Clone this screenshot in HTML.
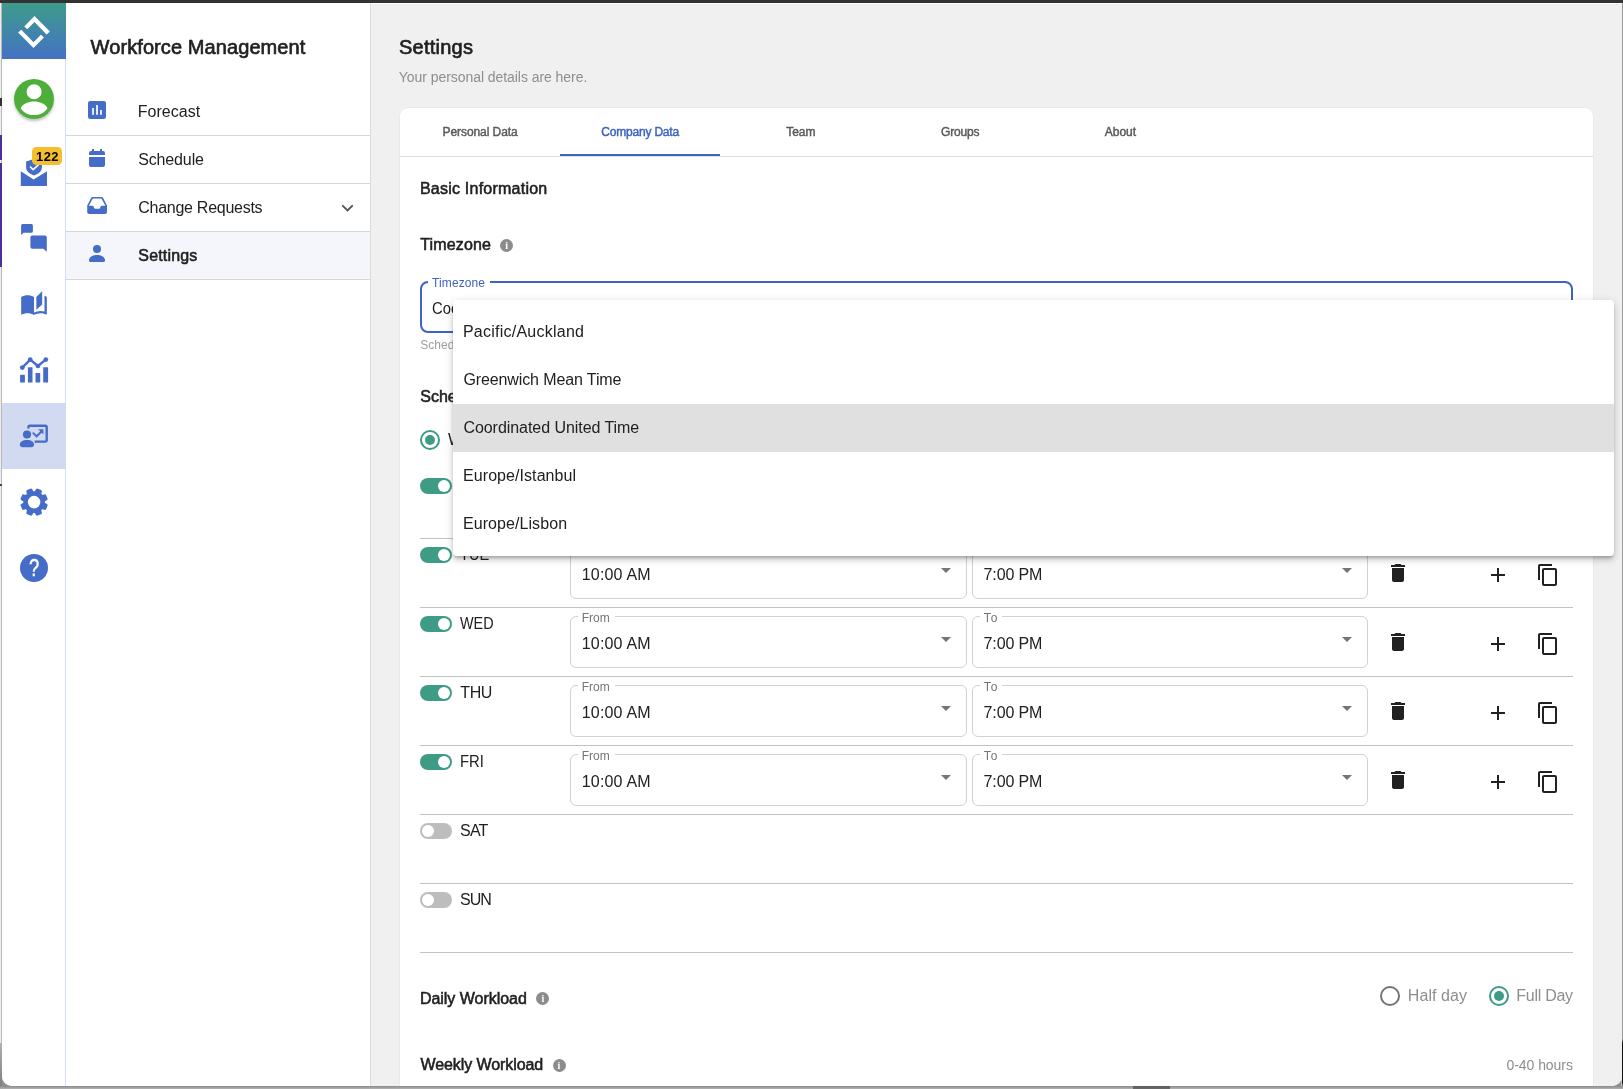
<!DOCTYPE html>
<html lang="en"><head><meta charset="utf-8"><title>Workforce Management - Settings</title>
<style>
*{box-sizing:border-box;margin:0;padding:0}
html,body{width:1623px;height:1089px;overflow:hidden}
body{position:relative;background:#8f8f8f;font-family:"Liberation Sans",sans-serif;-webkit-font-smoothing:antialiased}
.topbar{position:absolute;left:0;top:0;width:1623px;height:3px;background:#333}
.leftstrip{position:absolute;left:0;top:3px;width:2px;height:1086px;background:linear-gradient(#4b2f9d,#4b2f9d) 0 132px/2px 25px no-repeat,linear-gradient(#4b2f9d,#4b2f9d) 0 160px/2px 104px no-repeat,linear-gradient(#333,#333) 0 95px/2px 8px no-repeat,linear-gradient(#444,#444) 0 481px/2px 2px no-repeat,linear-gradient(90deg,#ededed 0,#ededed 1px,#b9b9b9 1px,#b9b9b9 2px) 0 0/2px 1040px no-repeat,linear-gradient(#b0b0b0,#7d7d7d) 0 1040px/2px 46px no-repeat}
.rightstrip{position:absolute;left:1621px;top:3px;width:2px;height:1086px;background:linear-gradient(90deg,#c8c8c8 0,#c8c8c8 1px,transparent 1px),linear-gradient(#9c9c9c 0,#9c9c9c 1036px,#111 1040px,#111 1080px,#8d8d8d 1083px)}
.bottomstrip{position:absolute;left:0;top:1086px;width:1623px;height:3px;background:linear-gradient(#5c5c5c,#6a6a6a) 1133px 0/37px 3px no-repeat,linear-gradient(#8a8a8a,#b2b2b2)}
.win{position:absolute;left:2px;top:3px;width:1620px;height:1083px;overflow:hidden;background:#fff;border-radius:0 0 10px 10px}
.page{position:absolute;left:-2px;top:-3px;width:1623px;height:1089px;will-change:transform}
.page>*{position:absolute}
.mainbg{left:371px;top:3px;width:1252px;height:1086px;background:#f0f0f0;border-top:1px solid #fff}
.rail{left:2px;top:3px;width:64px;height:1086px;background:#fff;border-right:1px solid #d5dff3}
.logo{left:2px;top:3px;width:64px;height:56px;background:linear-gradient(#3d9c8b,#4472c4)}
.logo svg{display:block}
.railactive{left:2px;top:403px;width:64px;height:66px;background:#d2daf2}
.avatar{left:14px;top:79px;width:40px;height:40px;border-radius:50%;box-shadow:0 2px 3px rgba(0,0,0,.25)}
.nav{left:66px;top:3px;width:305px;height:1086px;background:#fff;border-right:1px solid #dcdcdc}
.navrow{left:66px;width:304px;height:48px;border-bottom:1px solid #d6d6d6}
.navrow.sel{background:#f5f6fc}
.ic{position:absolute;display:block;overflow:visible}
.t{position:absolute;white-space:nowrap;display:block}
.card{left:400px;top:108px;width:1193px;height:1000px;background:#fff;border-radius:8px;box-shadow:0 0 0 .5px rgba(0,0,0,.06)}
.tabline{left:400px;top:156px;width:1193px;height:1px;background:#dedede}
.tabind{left:560px;top:154px;width:160px;height:2px;background:#3f63c3}
.tzfield{left:420px;top:281px;width:1153px;height:52px;border:2px solid #3f63c3;border-radius:8px}
.notch{background:#fff}
.hr{left:420px;width:1153px;height:1px;background:#c2c2c2}
.fld{height:52px;border:1px solid #d2d2d2;border-radius:6px}
.tg{width:32px;height:16px;border-radius:8px}
.tg i{position:absolute;top:2px;width:12px;height:12px;border-radius:50%;background:#fff}
.tg.on{background:#3d9b86}
.tg.on i{left:18.4px}
.tg.off{background:#bdbdbd}
.tg.off i{left:1.6px}
.radio{width:20px;height:20px;border-radius:50%;border:2px solid #3d9b86}
.radio i{position:absolute;left:3px;top:3px;width:10px;height:10px;border-radius:50%;background:#3d9b86}
.radio.off{border-color:#757575}
.menu{left:453px;top:300px;width:1161px;height:256px;background:#fff;border-radius:4px;box-shadow:0 3px 3px -1px rgba(0,0,0,.2),0 5px 6px 0 rgba(0,0,0,.12),0 1px 9px 0 rgba(0,0,0,.12)}
.mi.sel{position:absolute;left:0;top:104px;width:1161px;height:48px;background:#e0e0e0}
.info{width:13px;height:13px;border-radius:50%;background:#8c8c8c;color:#fff;font-size:10px;line-height:13px;font-weight:700;text-align:center;font-family:"Liberation Serif","Liberation Sans",serif}
.badge{left:32px;top:147px;width:30px;height:18px;border-radius:4.5px;background:#f5be2c}

</style></head>
<body>
<div class="topbar"></div>
<div class="leftstrip"></div>
<div class="rightstrip"></div>
<div class="bottomstrip"></div>
<div class="win">
<div class="page">
<div class="mainbg"></div>
<div class="rail"></div>
<div class="logo"><svg width="64" height="56" viewBox="2 3 64 56"><path fill="#fff" d="M24.2 26.5 34.5 15.9 49.9 31.5 46.6 34.5 34.5 22.1 27.3 29.3z"/><path fill="#fff" d="M18.1 32.5 33.5 48.1 43.9 37.5 40.9 34.7 33.5 42.2 21.3 29.8z"/></svg></div>
<div class="railactive"></div>
<div class="avatar"></div>
<svg class="ic" style="left:10px;top:75px" width="48" height="48" viewBox="0 0 24 24"><circle cx="12" cy="12" r="10" fill="#4dae3a"/><circle cx="12.05" cy="8.35" r="3.75" fill="#fff"/><path fill="#fff" d="M12.05 13.3c2.6 0 6.1 1.3 6.65 3.4-1.4 2.1-3.9 3.35-6.65 3.35s-5.25-1.25-6.65-3.35c.55-2.1 4.05-3.4 6.65-3.4z"/></svg>
<svg class="ic" style="left:2px;top:3px" width="64" height="640" viewBox="2 3 64 640">
<path fill="#456cc8" d="M20.8 171.2 33.6 179.5 47 171.2V185.9H20.8Z"/>
<path fill="#456cc8" d="M34 159 41.9 161.6V167.2C41.9 171 38.6 174 34 175.4 29.4 174 26.1 171 26.1 167.2V161.6Z"/>
<path fill="none" stroke="#fff" stroke-width="1.5" d="M30 166.6 33.2 169.6 38.6 164.6"/>
<path fill="#456cc8" d="M22.6 224H31.4Q32.9 224 32.9 225.5V231.2Q32.9 232.7 31.4 232.7H23.6L21.1 235V225.5Q21.1 224 22.6 224Z"/>
<path fill="#456cc8" d="M32.2 235.4H45Q46.8 235.4 46.8 237.2V251.8L43.4 248.8H32.2Q30.4 248.8 30.4 247V237.2Q30.4 235.4 32.2 235.4Z"/>
<g transform="translate(20 290) scale(1.1667)"><path fill="#456cc8" d="M19 1l-5 5v11l5-4.5V1zM1 6v14.65c0 .25.25.5.5.5.1 0 .15-.05.25-.05C3.1 20.45 5.05 20 6.5 20c1.95 0 4.05.4 5.5 1.5V6c-1.45-1.1-3.55-1.5-5.5-1.5S2.45 4.9 1 6zm22 13.5V6c-.6-.45-1.25-.75-2-1v13.5c-1.1-.35-2.3-.5-3.5-.5-1.7 0-4.15.65-5.5 1.5v2c1.35-.85 3.8-1.5 5.5-1.5 1.65 0 3.35.3 4.75 1.05.1.05.15.05.25.05.25 0 .5-.25.5-.5v-1.1z"/></g>
<rect x="20.1" y="374.8" width="4.8" height="7.8" rx="0.6" fill="#456cc8"/>
<rect x="27.9" y="367.2" width="4.6" height="15.4" rx="0.6" fill="#456cc8"/>
<rect x="35.5" y="373.0" width="4.7" height="9.6" rx="0.6" fill="#456cc8"/>
<rect x="43.2" y="367.2" width="4.9" height="15.4" rx="0.6" fill="#456cc8"/>
<path fill="none" stroke="#456cc8" stroke-width="2.3" stroke-linejoin="round" d="M22.3 367.6 30.2 359.6 37.9 366 45.8 359.6"/>
<circle cx="22.3" cy="367.6" r="2.35" fill="#456cc8"/>
<circle cx="30.2" cy="359.6" r="2.35" fill="#456cc8"/>
<circle cx="37.9" cy="366.0" r="2.35" fill="#456cc8"/>
<circle cx="45.8" cy="359.6" r="2.35" fill="#456cc8"/>
<path fill="none" stroke="#456cc8" stroke-width="2.4" stroke-linejoin="round" d="M28.4 428.6V427.3Q28.4 425.8 29.9 425.8H45.2Q46.7 425.8 46.7 427.3V440.1Q46.7 441.6 45.2 441.6H34.6"/>
<circle cx="27" cy="434.5" r="4.1" fill="#456cc8"/>
<path fill="#456cc8" d="M19.9 444.6C19.9 441.8 22.6 440 27 440S34 441.8 34 444.6Q34 447.3 31.3 447.3H22.6Q19.9 447.3 19.9 444.6Z"/>
<path fill="none" stroke="#456cc8" stroke-width="2" d="M32.8 432.6 36.6 436.3 42.3 430.8"/>
<path fill="#456cc8" d="M38.2 429.2H43.4V434.4Z"/>
<path fill="#456cc8" stroke="#456cc8" stroke-width="2.8" stroke-linejoin="round" d="M43.58 503.60 L46.21 505.21 L44.86 508.46 L41.87 507.74 L39.74 509.87 L40.46 512.86 L37.21 514.21 L35.60 511.58 L32.60 511.58 L30.99 514.21 L27.74 512.86 L28.46 509.87 L26.33 507.74 L23.34 508.46 L21.99 505.21 L24.62 503.60 L24.62 500.60 L21.99 498.99 L23.34 495.74 L26.33 496.46 L28.46 494.33 L27.74 491.34 L30.99 489.99 L32.60 492.62 L35.60 492.62 L37.21 489.99 L40.46 491.34 L39.74 494.33 L41.87 496.46 L44.86 495.74 L46.21 498.99 L43.58 500.60Z"/><circle cx="34.1" cy="502.1" r="6.3" fill="#fff"/>
<circle cx="34" cy="568" r="14" fill="#456cc8"/>
</svg>
<span class="t" style="left:24px;top:555px;width:20px;text-align:center;font-size:23.5px;line-height:26px;color:#fff;-webkit-text-stroke:.4px #fff;transform:scaleX(.78)">?</span>
<div class="badge"></div>
<span class="t" id="t0" style="left:36.06px;top:150px;font-size:13px;line-height:13px;color:#000;font-weight:700;letter-spacing:0.369px;">122</span>
<div class="nav"></div>
<div class="navrow" style="top:88px"></div>
<div class="navrow" style="top:136px"></div>
<div class="navrow" style="top:184px"></div>
<div class="navrow sel" style="top:232px"></div>
<span class="t" id="t1" style="left:90.58px;top:37px;font-size:20px;line-height:20px;color:#212121;-webkit-text-stroke:0.65px #212121;letter-spacing:0.089px;">Workforce Management</span>
<span class="t" id="t2" style="left:137.84px;top:104px;font-size:16px;line-height:16px;color:#212121;letter-spacing:0.010px;">Forecast</span>
<span class="t" id="t3" style="left:138.19px;top:152px;font-size:16px;line-height:16px;color:#212121;letter-spacing:-0.136px;">Schedule</span>
<span class="t" id="t4" style="left:138.23px;top:200px;font-size:16px;line-height:16px;color:#212121;letter-spacing:-0.265px;">Change Requests</span>
<span class="t" id="t5" style="left:138.36px;top:248px;font-size:16px;line-height:16px;color:#212121;-webkit-text-stroke:0.55px #212121;letter-spacing:0.159px;">Settings</span>
<svg class="ic" style="left:66px;top:88px" width="304" height="192" viewBox="66 88 304 192">
<rect x="88" y="101" width="18" height="18" rx="2.2" fill="#456cc8"/>
<rect x="92" y="108" width="2" height="6.8" fill="#e3e9f7"/>
<rect x="96" y="105" width="2" height="9.8" fill="#e3e9f7"/>
<rect x="100" y="110" width="2" height="4.8" fill="#e3e9f7"/>
<rect x="92" y="149" width="2" height="3" fill="#456cc8"/><rect x="100" y="149" width="2" height="3" fill="#456cc8"/>
<path fill="#456cc8" d="M91 151H103Q105 151 105 153V155H89V153Q89 151 91 151ZM89 157H105V165Q105 167 103 167H91Q89 167 89 165Z"/>
<path fill="#456cc8" fill-rule="evenodd" d="M87.2 205.4 91.2 197.8Q91.7 197 92.7 197H101.5Q102.5 197 103 197.8L107 205.4V212Q107 214 105 214H89.2Q87.2 214 87.2 212ZM88.8 205.7H92.3Q93.3 205.7 93.6 206.6L94 207.8Q94.3 208.7 95.3 208.7H98.9Q99.9 208.7 100.2 207.8L100.6 206.6Q100.9 205.7 101.9 205.7H105.4L101.7 198.9Q101.5 198.6 101.1 198.6H93.1Q92.7 198.6 92.5 198.9Z"/>
<circle cx="97" cy="249" r="4" fill="#456cc8"/>
<path fill="#456cc8" d="M89 260.5C89 257.2 92.4 255 97 255S105 257.2 105 260.5Q105 262 103.5 262H90.5Q89 262 89 260.5Z"/>
<path fill="none" stroke="#555" stroke-width="1.9" stroke-linecap="round" stroke-linejoin="miter" d="M342.8 205.8 347.5 210.5 352.2 205.8"/>
</svg>
<span class="t" id="t6" style="left:398.97px;top:37px;font-size:20px;line-height:20px;color:#212121;-webkit-text-stroke:0.65px #212121;letter-spacing:0.252px;">Settings</span>
<span class="t" id="t7" style="left:398.75px;top:70px;font-size:14px;line-height:14px;color:#8e8e8e;letter-spacing:-0.053px;">Your personal details are here.</span>
<div class="card"></div>
<div class="tabline"></div>
<div class="tabind"></div>
<span class="t" id="t8" style="left:442.55px;top:126px;font-size:12px;line-height:12px;color:#5a5a5a;-webkit-text-stroke:0.45px #5a5a5a;letter-spacing:-0.077px;">Personal Data</span>
<span class="t" id="t9" style="left:601.31px;top:126px;font-size:12px;line-height:12px;color:#3f63c3;-webkit-text-stroke:0.45px #3f63c3;letter-spacing:-0.199px;">Company Data</span>
<span class="t" id="t10" style="left:786.18px;top:126px;font-size:12px;line-height:12px;color:#5a5a5a;-webkit-text-stroke:0.45px #5a5a5a;letter-spacing:-0.041px;">Team</span>
<span class="t" id="t11" style="left:941.09px;top:126px;font-size:12px;line-height:12px;color:#5a5a5a;-webkit-text-stroke:0.45px #5a5a5a;letter-spacing:-0.201px;">Groups</span>
<span class="t" id="t12" style="left:1104.77px;top:126px;font-size:12px;line-height:12px;color:#5a5a5a;-webkit-text-stroke:0.45px #5a5a5a;">About</span>
<span class="t" id="t13" style="left:419.91px;top:181px;font-size:16px;line-height:16px;color:#212121;-webkit-text-stroke:0.55px #212121;letter-spacing:0.232px;">Basic Information</span>
<span class="t" id="t14" style="left:420.26px;top:237px;font-size:16px;line-height:16px;color:#212121;-webkit-text-stroke:0.55px #212121;letter-spacing:0.140px;">Timezone</span>
<div class="info" style="left:500.1px;top:238.5px">i</div>
<div class="tzfield"></div>
<div class="notch" style="left:428px;top:280px;width:62px;height:4px"></div>
<span class="t" id="t15" style="left:432.10px;top:277px;font-size:12px;line-height:12px;color:#3f63c3;letter-spacing:0.097px;">Timezone</span>
<span class="t" id="t16" style="left:432.00px;top:301px;font-size:16px;line-height:16px;color:#212121;transform:scaleX(.925);transform-origin:0 0;">Coordinated United Time</span>
<span class="t" id="t17" style="left:420.30px;top:339px;font-size:12px;line-height:12px;color:#9e9e9e;">Schedules are shown in this timezone</span>
<span class="t" id="t18" style="left:420.30px;top:389px;font-size:16px;line-height:16px;color:#212121;-webkit-text-stroke:0.55px #212121;">Schedule</span>
<div class="radio on" style="left:420px;top:430px"><i></i></div>
<span class="t" id="t19" style="left:448.00px;top:432px;font-size:16px;line-height:16px;color:#212121;">Weekly</span>
<div class="tg on" style="left:420px;top:478px"><i></i></div>
<span class="t" id="t20" style="left:459.24px;top:478px;font-size:16px;line-height:16px;color:#212121;letter-spacing:-0.664px;">MON</span>
<div class="fld" style="left:570px;top:478px;width:397px"></div>
<div class="notch" style="left:578px;top:477px;width:37px;height:3px"></div>
<span class="t" id="t21" style="left:581.73px;top:474px;font-size:12px;line-height:12px;color:#757575;letter-spacing:0.021px;">From</span>
<span class="t" id="t22" style="left:581.80px;top:498px;font-size:16px;line-height:16px;color:#212121;letter-spacing:0.170px;">10:00 AM</span>
<svg class="ic" style="left:933.8px;top:489px" width="24" height="24" viewBox="0 0 24 24" ><path fill="#757575" d="M7 10l5 5 5-5z"/></svg>
<div class="fld" style="left:972px;top:478px;width:396px"></div>
<div class="notch" style="left:980px;top:477px;width:22px;height:3px"></div>
<span class="t" id="t23" style="left:983.85px;top:474px;font-size:12px;line-height:12px;color:#757575;letter-spacing:0.981px;">To</span>
<span class="t" id="t24" style="left:983.55px;top:498px;font-size:16px;line-height:16px;color:#212121;letter-spacing:-0.115px;">7:00 PM</span>
<svg class="ic" style="left:1335px;top:489px" width="24" height="24" viewBox="0 0 24 24" ><path fill="#757575" d="M7 10l5 5 5-5z"/></svg>
<svg class="ic" style="left:1386px;top:492px" width="24" height="24" viewBox="0 0 24 24" ><path fill="#212121" d="M6 19c0 1.1.9 2 2 2h8c1.1 0 2-.9 2-2V7H6v12zM19 4h-3.5l-1-1h-5l-1 1H5v2h14V4z"/></svg>
<svg class="ic" style="left:1486px;top:494px" width="24" height="24" viewBox="0 0 24 24" ><path fill="#212121" d="M19 13h-6v6h-2v-6H5v-2h6V5h2v6h6v2z"/></svg>
<svg class="ic" style="left:1536px;top:494px" width="24" height="24" viewBox="0 0 24 24" ><path fill="#212121" d="M16 1H4c-1.1 0-2 .9-2 2v14h2V3h12V1zm3 4H8c-1.1 0-2 .9-2 2v14c0 1.1.9 2 2 2h11c1.1 0 2-.9 2-2V7c0-1.1-.9-2-2-2zm0 16H8V7h11v14z"/></svg>
<div class="hr" style="top:538px"></div>
<div class="tg on" style="left:420px;top:547px"><i></i></div>
<span class="t" id="t25" style="left:460.12px;top:547px;font-size:16px;line-height:16px;color:#212121;transform:scaleX(0.9136);transform-origin:0 0;">TUE</span>
<div class="fld" style="left:570px;top:547px;width:397px"></div>
<div class="notch" style="left:578px;top:546px;width:37px;height:3px"></div>
<span class="t" id="t26" style="left:581.73px;top:543px;font-size:12px;line-height:12px;color:#757575;letter-spacing:0.021px;">From</span>
<span class="t" id="t27" style="left:581.80px;top:567px;font-size:16px;line-height:16px;color:#212121;letter-spacing:0.170px;">10:00 AM</span>
<svg class="ic" style="left:933.8px;top:558px" width="24" height="24" viewBox="0 0 24 24" ><path fill="#757575" d="M7 10l5 5 5-5z"/></svg>
<div class="fld" style="left:972px;top:547px;width:396px"></div>
<div class="notch" style="left:980px;top:546px;width:22px;height:3px"></div>
<span class="t" id="t28" style="left:983.85px;top:543px;font-size:12px;line-height:12px;color:#757575;letter-spacing:0.981px;">To</span>
<span class="t" id="t29" style="left:983.55px;top:567px;font-size:16px;line-height:16px;color:#212121;letter-spacing:-0.115px;">7:00 PM</span>
<svg class="ic" style="left:1335px;top:558px" width="24" height="24" viewBox="0 0 24 24" ><path fill="#757575" d="M7 10l5 5 5-5z"/></svg>
<svg class="ic" style="left:1386px;top:561px" width="24" height="24" viewBox="0 0 24 24" ><path fill="#212121" d="M6 19c0 1.1.9 2 2 2h8c1.1 0 2-.9 2-2V7H6v12zM19 4h-3.5l-1-1h-5l-1 1H5v2h14V4z"/></svg>
<svg class="ic" style="left:1486px;top:563px" width="24" height="24" viewBox="0 0 24 24" ><path fill="#212121" d="M19 13h-6v6h-2v-6H5v-2h6V5h2v6h6v2z"/></svg>
<svg class="ic" style="left:1536px;top:563px" width="24" height="24" viewBox="0 0 24 24" ><path fill="#212121" d="M16 1H4c-1.1 0-2 .9-2 2v14h2V3h12V1zm3 4H8c-1.1 0-2 .9-2 2v14c0 1.1.9 2 2 2h11c1.1 0 2-.9 2-2V7c0-1.1-.9-2-2-2zm0 16H8V7h11v14z"/></svg>
<div class="hr" style="top:607px"></div>
<div class="tg on" style="left:420px;top:616px"><i></i></div>
<span class="t" id="t30" style="left:460.21px;top:616px;font-size:16px;line-height:16px;color:#212121;transform:scaleX(0.8986);transform-origin:0 0;">WED</span>
<div class="fld" style="left:570px;top:616px;width:397px"></div>
<div class="notch" style="left:578px;top:615px;width:37px;height:3px"></div>
<span class="t" id="t31" style="left:581.73px;top:612px;font-size:12px;line-height:12px;color:#757575;letter-spacing:0.021px;">From</span>
<span class="t" id="t32" style="left:581.80px;top:636px;font-size:16px;line-height:16px;color:#212121;letter-spacing:0.170px;">10:00 AM</span>
<svg class="ic" style="left:933.8px;top:627px" width="24" height="24" viewBox="0 0 24 24" ><path fill="#757575" d="M7 10l5 5 5-5z"/></svg>
<div class="fld" style="left:972px;top:616px;width:396px"></div>
<div class="notch" style="left:980px;top:615px;width:22px;height:3px"></div>
<span class="t" id="t33" style="left:983.85px;top:612px;font-size:12px;line-height:12px;color:#757575;letter-spacing:0.981px;">To</span>
<span class="t" id="t34" style="left:983.55px;top:636px;font-size:16px;line-height:16px;color:#212121;letter-spacing:-0.115px;">7:00 PM</span>
<svg class="ic" style="left:1335px;top:627px" width="24" height="24" viewBox="0 0 24 24" ><path fill="#757575" d="M7 10l5 5 5-5z"/></svg>
<svg class="ic" style="left:1386px;top:630px" width="24" height="24" viewBox="0 0 24 24" ><path fill="#212121" d="M6 19c0 1.1.9 2 2 2h8c1.1 0 2-.9 2-2V7H6v12zM19 4h-3.5l-1-1h-5l-1 1H5v2h14V4z"/></svg>
<svg class="ic" style="left:1486px;top:632px" width="24" height="24" viewBox="0 0 24 24" ><path fill="#212121" d="M19 13h-6v6h-2v-6H5v-2h6V5h2v6h6v2z"/></svg>
<svg class="ic" style="left:1536px;top:632px" width="24" height="24" viewBox="0 0 24 24" ><path fill="#212121" d="M16 1H4c-1.1 0-2 .9-2 2v14h2V3h12V1zm3 4H8c-1.1 0-2 .9-2 2v14c0 1.1.9 2 2 2h11c1.1 0 2-.9 2-2V7c0-1.1-.9-2-2-2zm0 16H8V7h11v14z"/></svg>
<div class="hr" style="top:676px"></div>
<div class="tg on" style="left:420px;top:685px"><i></i></div>
<span class="t" id="t35" style="left:460.21px;top:685px;font-size:16px;line-height:16px;color:#212121;letter-spacing:-0.350px;">THU</span>
<div class="fld" style="left:570px;top:685px;width:397px"></div>
<div class="notch" style="left:578px;top:684px;width:37px;height:3px"></div>
<span class="t" id="t36" style="left:581.73px;top:681px;font-size:12px;line-height:12px;color:#757575;letter-spacing:0.021px;">From</span>
<span class="t" id="t37" style="left:581.80px;top:705px;font-size:16px;line-height:16px;color:#212121;letter-spacing:0.170px;">10:00 AM</span>
<svg class="ic" style="left:933.8px;top:696px" width="24" height="24" viewBox="0 0 24 24" ><path fill="#757575" d="M7 10l5 5 5-5z"/></svg>
<div class="fld" style="left:972px;top:685px;width:396px"></div>
<div class="notch" style="left:980px;top:684px;width:22px;height:3px"></div>
<span class="t" id="t38" style="left:983.85px;top:681px;font-size:12px;line-height:12px;color:#757575;letter-spacing:0.981px;">To</span>
<span class="t" id="t39" style="left:983.55px;top:705px;font-size:16px;line-height:16px;color:#212121;letter-spacing:-0.115px;">7:00 PM</span>
<svg class="ic" style="left:1335px;top:696px" width="24" height="24" viewBox="0 0 24 24" ><path fill="#757575" d="M7 10l5 5 5-5z"/></svg>
<svg class="ic" style="left:1386px;top:699px" width="24" height="24" viewBox="0 0 24 24" ><path fill="#212121" d="M6 19c0 1.1.9 2 2 2h8c1.1 0 2-.9 2-2V7H6v12zM19 4h-3.5l-1-1h-5l-1 1H5v2h14V4z"/></svg>
<svg class="ic" style="left:1486px;top:701px" width="24" height="24" viewBox="0 0 24 24" ><path fill="#212121" d="M19 13h-6v6h-2v-6H5v-2h6V5h2v6h6v2z"/></svg>
<svg class="ic" style="left:1536px;top:701px" width="24" height="24" viewBox="0 0 24 24" ><path fill="#212121" d="M16 1H4c-1.1 0-2 .9-2 2v14h2V3h12V1zm3 4H8c-1.1 0-2 .9-2 2v14c0 1.1.9 2 2 2h11c1.1 0 2-.9 2-2V7c0-1.1-.9-2-2-2zm0 16H8V7h11v14z"/></svg>
<div class="hr" style="top:745px"></div>
<div class="tg on" style="left:420px;top:754px"><i></i></div>
<span class="t" id="t40" style="left:460.06px;top:754px;font-size:16px;line-height:16px;color:#212121;transform:scaleX(0.9253);transform-origin:0 0;">FRI</span>
<div class="fld" style="left:570px;top:754px;width:397px"></div>
<div class="notch" style="left:578px;top:753px;width:37px;height:3px"></div>
<span class="t" id="t41" style="left:581.73px;top:750px;font-size:12px;line-height:12px;color:#757575;letter-spacing:0.021px;">From</span>
<span class="t" id="t42" style="left:581.80px;top:774px;font-size:16px;line-height:16px;color:#212121;letter-spacing:0.170px;">10:00 AM</span>
<svg class="ic" style="left:933.8px;top:765px" width="24" height="24" viewBox="0 0 24 24" ><path fill="#757575" d="M7 10l5 5 5-5z"/></svg>
<div class="fld" style="left:972px;top:754px;width:396px"></div>
<div class="notch" style="left:980px;top:753px;width:22px;height:3px"></div>
<span class="t" id="t43" style="left:983.85px;top:750px;font-size:12px;line-height:12px;color:#757575;letter-spacing:0.981px;">To</span>
<span class="t" id="t44" style="left:983.55px;top:774px;font-size:16px;line-height:16px;color:#212121;letter-spacing:-0.115px;">7:00 PM</span>
<svg class="ic" style="left:1335px;top:765px" width="24" height="24" viewBox="0 0 24 24" ><path fill="#757575" d="M7 10l5 5 5-5z"/></svg>
<svg class="ic" style="left:1386px;top:768px" width="24" height="24" viewBox="0 0 24 24" ><path fill="#212121" d="M6 19c0 1.1.9 2 2 2h8c1.1 0 2-.9 2-2V7H6v12zM19 4h-3.5l-1-1h-5l-1 1H5v2h14V4z"/></svg>
<svg class="ic" style="left:1486px;top:770px" width="24" height="24" viewBox="0 0 24 24" ><path fill="#212121" d="M19 13h-6v6h-2v-6H5v-2h6V5h2v6h6v2z"/></svg>
<svg class="ic" style="left:1536px;top:770px" width="24" height="24" viewBox="0 0 24 24" ><path fill="#212121" d="M16 1H4c-1.1 0-2 .9-2 2v14h2V3h12V1zm3 4H8c-1.1 0-2 .9-2 2v14c0 1.1.9 2 2 2h11c1.1 0 2-.9 2-2V7c0-1.1-.9-2-2-2zm0 16H8V7h11v14z"/></svg>
<div class="hr" style="top:814px"></div>
<div class="tg off" style="left:420px;top:823px"><i></i></div>
<span class="t" id="t45" style="left:460.10px;top:823px;font-size:16px;line-height:16px;color:#212121;letter-spacing:-0.889px;">SAT</span>
<div class="hr" style="top:883px"></div>
<div class="tg off" style="left:420px;top:892px"><i></i></div>
<span class="t" id="t46" style="left:460.10px;top:892px;font-size:16px;line-height:16px;color:#212121;letter-spacing:-1.056px;">SUN</span>
<div class="hr" style="top:952px"></div>
<span class="t" id="t47" style="left:419.90px;top:991px;font-size:16px;line-height:16px;color:#212121;-webkit-text-stroke:0.55px #212121;letter-spacing:-0.028px;">Daily Workload</span>
<div class="info" style="left:536.3px;top:992.4px">i</div>
<div class="radio off" style="left:1380px;top:986px"></div>
<span class="t" id="t48" style="left:1407.84px;top:988px;font-size:16px;line-height:16px;color:#8e8e8e;letter-spacing:0.069px;">Half day</span>
<div class="radio on" style="left:1489px;top:986px"><i></i></div>
<span class="t" id="t49" style="left:1516.33px;top:988px;font-size:16px;line-height:16px;color:#8e8e8e;letter-spacing:-0.273px;">Full Day</span>
<span class="t" id="t50" style="left:420.51px;top:1057px;font-size:16px;line-height:16px;color:#212121;-webkit-text-stroke:0.55px #212121;letter-spacing:-0.085px;">Weekly Workload</span>
<div class="info" style="left:552.5px;top:1058.5px">i</div>
<span class="t" id="t51" style="left:1506.50px;top:1058px;font-size:14px;line-height:14px;color:#8e8e8e;letter-spacing:-0.057px;">0-40 hours</span>
<div class="menu"><div class="mi sel"></div></div>
<span class="t" id="t52" style="left:462.95px;top:324px;font-size:16px;line-height:16px;color:#212121;letter-spacing:0.240px;">Pacific/Auckland</span>
<span class="t" id="t53" style="left:463.48px;top:372px;font-size:16px;line-height:16px;color:#212121;letter-spacing:-0.117px;">Greenwich Mean Time</span>
<span class="t" id="t54" style="left:463.43px;top:420px;font-size:16px;line-height:16px;color:#212121;letter-spacing:-0.053px;">Coordinated United Time</span>
<span class="t" id="t55" style="left:463.04px;top:468px;font-size:16px;line-height:16px;color:#212121;letter-spacing:0.067px;">Europe/Istanbul</span>
<span class="t" id="t56" style="left:463.00px;top:516px;font-size:16px;line-height:16px;color:#212121;letter-spacing:0.070px;">Europe/Lisbon</span>
</div></div>
</body></html>
